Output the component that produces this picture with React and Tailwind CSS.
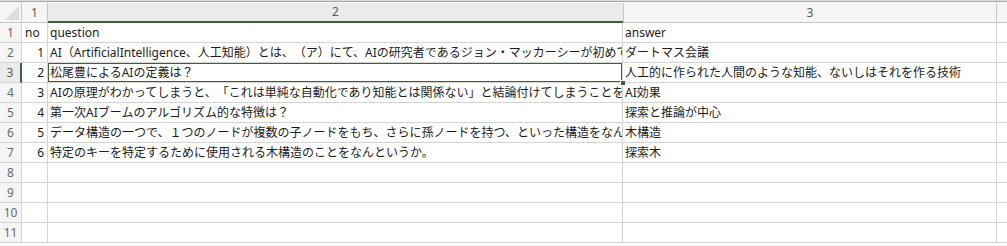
const rows = [
  { no: "no", q: "question", a: "answer", head: true },
  { no: "1", q: "AI（ArtificialIntelligence、人工知能）とは、（ア）にて、AIの研究者であるジョン・マッカーシーが初めて", a: "ダートマス会議" },
  { no: "2", q: "松尾豊によるAIの定義は？", a: "人工的に作られた人間のような知能、ないしはそれを作る技術", selected: true },
  { no: "3", q: "AIの原理がわかってしまうと、「これは単純な自動化であり知能とは関係ない」と結論付けてしまうことを", a: "AI効果" },
  { no: "4", q: "第一次AIブームのアルゴリズム的な特徴は？", a: "探索と推論が中心" },
  { no: "5", q: "データ構造の一つで、１つのノードが複数の子ノードをもち、さらに孫ノードを持つ、といった構造をなん", a: "木構造" },
  { no: "6", q: "特定のキーを特定するために使用される木構造のことをなんというか。", a: "探索木" },
  {},
  {},
  {},
  {},
];

function ColHeader() {
  return (
    <div className="flex h-5 bg-[#f5f5f5] text-[12px] text-[#5a5a5a]">
      <div className="relative w-[22px] shrink-0 border-r border-b border-[#c6c6c6]">
        <svg className="absolute right-[2px] bottom-[2px]" width="14" height="14" viewBox="0 0 14 14">
          <polygon points="14,0 14,14 0,14" fill="#dcdcdc" />
        </svg>
      </div>
      <div className="flex w-[26px] shrink-0 items-center justify-center border-r border-b border-[#c6c6c6]">1</div>
      <div className="flex w-[575px] shrink-0 items-center justify-center border-b-2 border-[#3f5f41] bg-[#ebebeb]">2</div>
      <div className="flex w-[374px] shrink-0 items-center justify-center border-x border-b border-[#c6c6c6]">3</div>
      <div className="flex-1 border-b border-[#c6c6c6]" />
    </div>
  );
}

function Row({ r, i }) {
  const sel = r.selected;
  return (
    <div className="flex h-5 text-[12px] text-[#1c1c1c]">
      <div
        className={
          sel
            ? "flex w-[22px] shrink-0 items-center justify-center border-r-2 border-b border-r-[#3f5f41] border-b-[#d4d4d4] bg-[#ebebeb] text-[#5a5a5a]"
            : "flex w-[22px] shrink-0 items-center justify-center border-r border-b border-[#d4d4d4] bg-[#f5f5f5] text-[#6a6a6a]"
        }
      >
        {i + 1}
      </div>
      <div
        className={
          "flex w-[26px] shrink-0 items-center border-r border-b border-[#d4d4d4] px-[3px] " +
          (r.head ? "justify-start" : "justify-end")
        }
      >
        {r.no}
      </div>
      <div className="relative flex w-[575px] shrink-0 items-center overflow-hidden whitespace-nowrap border-r border-b border-[#d4d4d4] pl-[2px]">
        <span className="min-w-0 overflow-hidden">{r.q}</span>
        {sel && <div className="absolute -inset-[1px] border-2 border-[#3f5f41]" />}
      </div>
      <div className="flex w-[374px] shrink-0 items-center whitespace-nowrap border-r border-b border-[#d4d4d4] pl-[2px]">
        {r.a}
      </div>
      <div className="flex-1 border-b border-[#d4d4d4]" />
    </div>
  );
}

export default function App() {
  return (
    <div
      className="relative h-[246px] w-[1007px] overflow-hidden bg-white [text-spacing-trim:space-all]"
      style={{ fontFamily: '"Noto Sans", "Noto Sans CJK JP", sans-serif' }}
    >
      <div className="h-px bg-[#dadada]" />
      <div className="h-px bg-[#a9a9a9]" />
      <div className="h-px bg-[#f5f5f5]" />
      <ColHeader />
      {rows.map((r, i) => (
        <Row key={i} r={r} i={i} />
      ))}
      <div className="absolute left-[620px] top-[80px] size-[6px] border border-white bg-[#3f5f41]" />
    </div>
  );
}
